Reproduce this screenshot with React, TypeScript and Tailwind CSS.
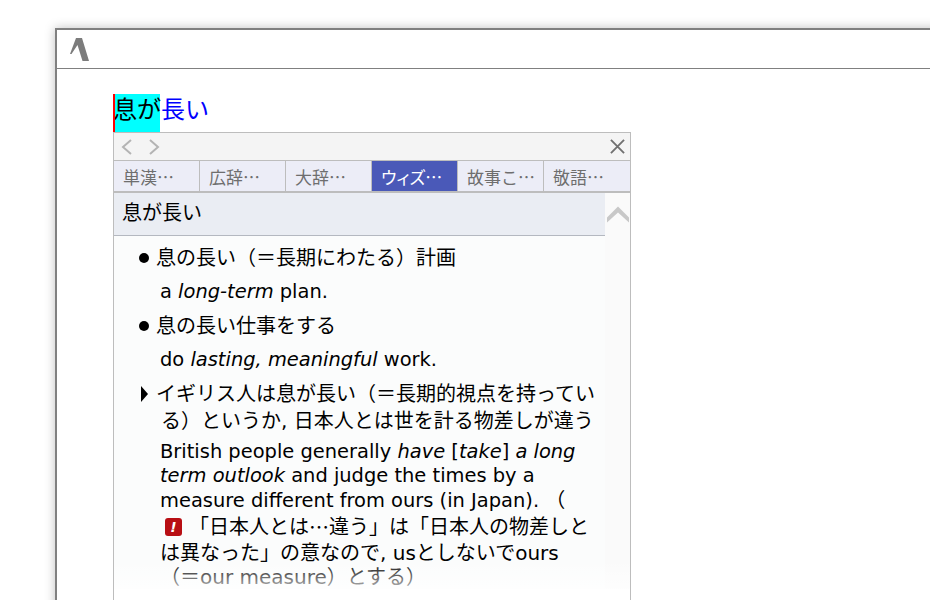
const font = "font-['DejaVu_Sans','Noto_Sans_CJK_JP',sans-serif]";

const tabs = [
  { label: '単漢…', active: false },
  { label: '広辞…', active: false },
  { label: '大辞…', active: false },
  { label: 'ウィズ…', active: true },
  { label: '故事こ…', active: false },
  { label: '敬語…', active: false },
];

function Chevron({ d, className }: { d: string; className: string }) {
  return (
    <svg viewBox="0 0 14 18" className={className} fill="none" stroke="currentColor" strokeWidth="2">
      <path d={d} />
    </svg>
  );
}

function Example({ mark, children }: { mark: 'dot' | 'arrow'; children: React.ReactNode }) {
  return (
    <div className="flex items-start h-[26px] leading-[26px]">
      <span className="w-[42px] h-[26px] shrink-0 flex items-center justify-end pr-[7px]">
        {mark === 'dot' ? (
          <span className="w-[10px] h-[10px] rounded-full bg-black" />
        ) : (
          <span className="w-0 h-0 border-y-[8px] border-y-transparent border-l-[7px] border-l-black mr-[1px]" />
        )}
      </span>
      <span className="whitespace-nowrap">{children}</span>
    </div>
  );
}

function Popup() {
  return (
    <div className="relative w-[518px] h-[468px] border-x border-t border-[#bdbdbd] overflow-hidden">
      <div className="h-[28px] bg-[#f4f4f4] border-b border-[#bdbdbd] flex items-center pl-[6px] pr-[5px]">
        <Chevron d="M11 2 3 9l8 7" className="w-[14px] h-[18px] text-[#b4b4b4]" />
        <Chevron d="M3 2l8 7-8 7" className="w-[14px] h-[18px] ml-[13px] text-[#b4b4b4]" />
        <svg viewBox="0 0 16 16" className="w-[15px] h-[15px] ml-auto text-[#707070]" fill="none" stroke="currentColor" strokeWidth="2">
          <path d="M1 1l14 14M15 1 1 15" />
        </svg>
      </div>
      <div className="h-[32px] flex bg-[#ecedf7] border-b-2 border-[#bdbdbd] font-['Noto_Sans_CJK_JP',sans-serif]">
        {tabs.map((t) => (
          <div
            key={t.label}
            className={`w-[86px] pl-[9px] text-[17px] leading-[32px] whitespace-nowrap border-r border-[#bdbdbd] last:border-r-0 ${
              t.active ? "bg-[#4a59b8] text-white [font-feature-settings:'palt']" : 'text-[#6e6e6e]'
            }`}
          >
            {t.label}
          </div>
        ))}
      </div>
      <div className="flex">
        <div className="w-[491px] bg-[#fbfcfc] text-[20px] text-black">
          <div className="h-[43px] bg-[#eaedf3] border-b border-[#b4b8c0] pl-[8px] leading-[41px]">息が長い</div>
          <div className="pt-[9px]">
            <Example mark="dot">息の長い（＝長期にわたる）計画</Example>
            <div className="pl-[46px] mt-[8px] h-[26px] leading-[26px] text-[19.45px]">
              a <i>long-term</i> plan.
            </div>
            <div className="mt-[8px]">
              <Example mark="dot">息の長い仕事をする</Example>
            </div>
            <div className="pl-[46px] mt-[8px] h-[26px] leading-[26px] text-[19.45px]">
              do <i>lasting, meaningful</i> work.
            </div>
            <div className="mt-[8px]">
              <Example mark="arrow">イギリス人は息が長い（＝長期的視点を持ってい</Example>
            </div>
            <div className="pl-[47px] h-[26px] leading-[26px] whitespace-nowrap mt-[1px]">る）というか, 日本人とは世を計る物差しが違う</div>
            <div className="pl-[46px] mt-[6px] leading-[24px] whitespace-nowrap text-[19.45px]">
              <div>
                British people generally <i>have</i> [<i>take</i>] <i>a long</i>
              </div>
              <div>
                <i>term outlook</i> and judge the times by a
              </div>
              <div>
                measure different from ours (in Japan). <span className="text-[20px]">（</span>
              </div>
            </div>
            <div className="pl-[46px] whitespace-nowrap">
              <div className="flex items-center h-[28px]">
                <span className="w-[17px] h-[18px] ml-[5px] mr-[7px] rounded-[3px] bg-[#b80f14] text-white text-[14px] font-bold italic leading-[18px] text-center">!</span>
                「日本人とは<span className="font-['Noto_Sans_CJK_JP',sans-serif]">…</span>違う」は「日本人の物差しと
              </div>
              <div className="h-[24px] leading-[24px]">は異なった」の意なので, usとしないでours</div>
              <div className="h-[24px] leading-[24px]">（＝our measure）とする）</div>
            </div>
          </div>
        </div>
        <div className="flex-1 bg-[#fafafa] pt-[13px] flex justify-center items-start">
          <svg viewBox="0 0 22 16" className="w-[22px] h-[17px] text-[#c8c8c8]" fill="currentColor">
            <path d="M11 0 22 11v5L11 6 0 16v-5z" />
          </svg>
        </div>
      </div>
      <div className="absolute left-[-1px] right-[-1px] bottom-0 h-[40px] bg-gradient-to-b from-white/0 to-white" />
    </div>
  );
}

export default function App() {
  return (
    <div className={`h-screen overflow-hidden bg-white pt-[28px] pl-[55px] ${font}`}>
      <div className="w-[1000px] h-[700px] border-2 border-[#808080] bg-white shadow-[0_0_10px_rgba(0,0,0,0.25)]">
        <div className="h-[39px] border-b border-[#808080] flex items-center pl-[12px]">
          <svg viewBox="0 0 20 24" className="w-[20px] h-[24px] text-[#7c7c7c]" fill="currentColor">
            <path d="M7 1h6l7 23h-6.500L8.500 8 2.500 17H1z" />
          </svg>
        </div>
        <div className="pt-[25px] pl-[56px]">
          <div className="flex h-[38px] text-[24px] leading-[32px] whitespace-nowrap">
            <span className="w-[2px] h-[38px] bg-[#ff0000] relative z-10" />
            <span className="w-[45px] h-[38px] bg-[#00ffff] text-black">
              <span className="block ml-[-2px]">息が</span>
            </span>
            <span className="text-[#0000ff] ml-[1px]">長い</span>
          </div>
          <Popup />
        </div>
      </div>
    </div>
  );
}
